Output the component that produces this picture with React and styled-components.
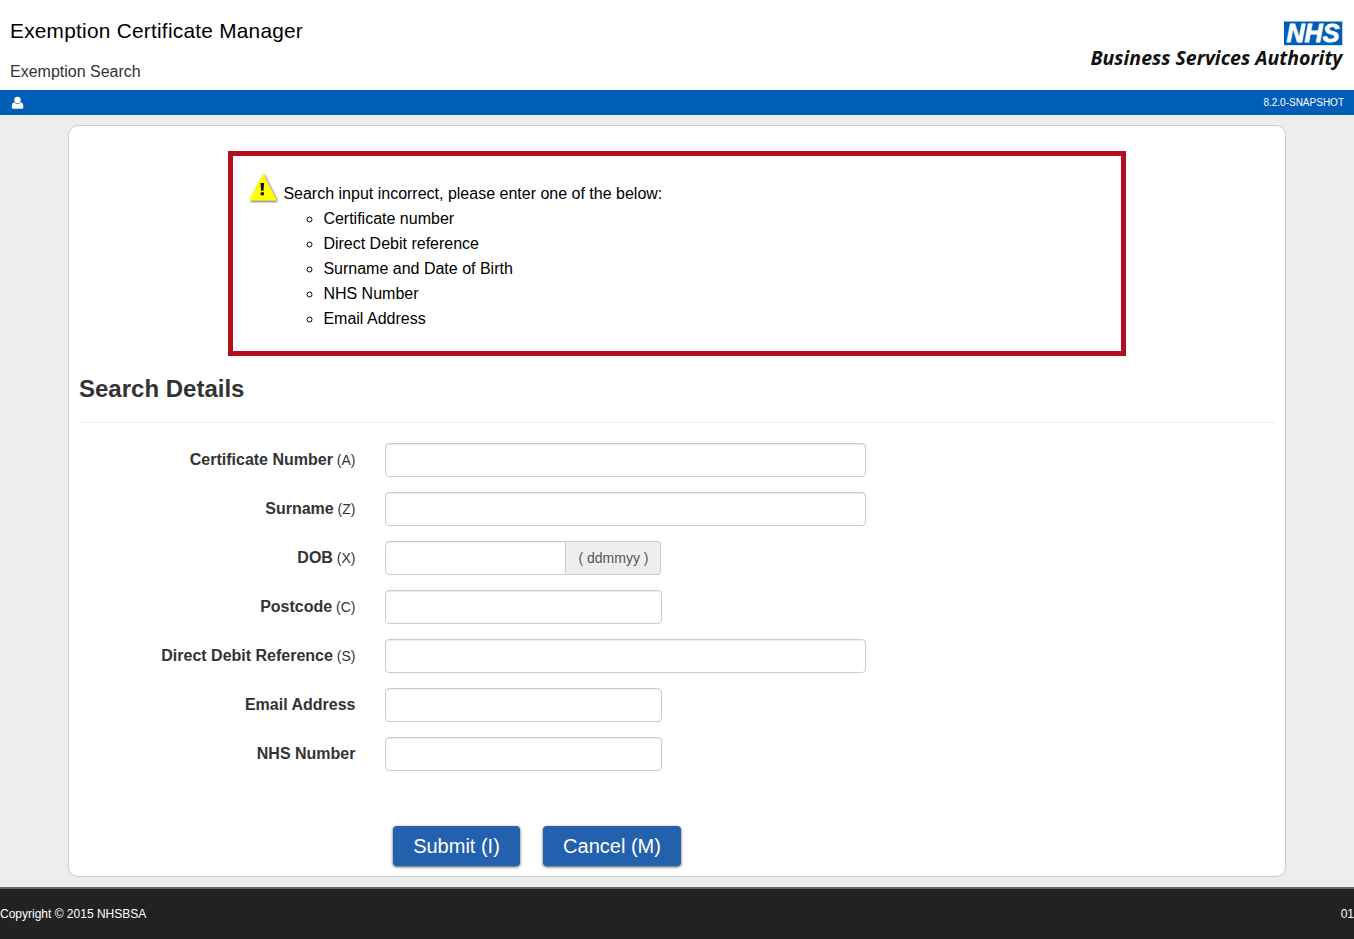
import React from "react";
import styled, { createGlobalStyle } from "styled-components";

const GlobalStyle = createGlobalStyle`
  *, *::before, *::after { box-sizing: border-box; }
  body {
    margin: 0;
    background: #ededed;
    color: #333;
    font: 16px/25px "Liberation Sans", Arial, sans-serif;
    overflow: hidden;
  }
`;

const Page = styled.div`
  display: flex;
  flex-direction: column;
  height: 939px;
`;

const Header = styled.header`
  display: flex;
  justify-content: space-between;
  height: 90px;
  padding: 18px 10px 0;
  background: #fff;
`;

const AppTitle = styled.h1`
  margin: 0;
  color: #000;
  font-size: 20.8px;
  font-weight: 400;
  line-height: 26px;
  letter-spacing: 0.26px;
`;

const PageTitle = styled.p`
  margin: 16px 0 0;
  line-height: 24px;
`;

const Logo = styled.svg`
  width: 256px;
  height: 54px;
`;

const TopBar = styled.div`
  display: flex;
  align-items: center;
  justify-content: space-between;
  height: 25px;
  padding: 0 10px 0 11px;
  background: #005eb8;
  color: #fff;
  font-size: 10px;
`;

const UserIcon = styled.svg`
  width: 13px;
  height: 13px;
  fill: #fff;
`;

const Panel = styled.main`
  width: 1218px;
  height: 752px;
  margin: 10px 0 10px 68px;
  padding: 25px 10px 0;
  border: 1px solid #ccc;
  border-radius: 10px;
  background: #fff;
`;

const Alert = styled.section`
  width: 898px;
  height: 205px;
  margin-left: 149px;
  padding: 16px 15px 0;
  border: 5px solid #b10e1e;
  color: #000;
`;

const AlertLead = styled.div`
  display: flex;
  height: 34px;
`;

const WarningIcon = styled.svg`
  width: 32px;
  height: 34px;
  margin-right: 3.4px;
`;

const AlertText = styled.span`
  padding-top: 9px;
`;

const AlertList = styled.ul`
  margin: 0;
  padding-left: 75.4px;
  list-style: circle;
`;

const SectionTitle = styled.h2`
  height: 67px;
  margin: 0 0 20px;
  padding-top: 20px;
  border-bottom: 1px solid #eee;
  font-size: 24px;
  line-height: 26px;
`;

const Form = styled.div`
  display: flex;
  flex-direction: column;
  gap: 15px;
`;

const Field = styled.div`
  display: flex;
  height: 34px;
`;

const Label = styled.label`
  width: 276.5px;
  margin-right: 29.5px;
  padding-top: 4px;
  font-weight: 700;
  text-align: right;
`;

const AccessKey = styled.span`
  font-size: 14px;
  font-weight: 400;
`;

const Input = styled.input`
  width: ${(p) => p.$width}px;
  height: 34px;
  padding: 6px 12px;
  border: 1px solid #ccc;
  border-radius: ${(p) => (p.$joined ? "4px 0 0 4px" : "4px")};
  background: #fff;
  box-shadow: inset 0 1px 1px rgba(0, 0, 0, 0.075);
  font: inherit;
`;

const Addon = styled.span`
  width: 95px;
  padding-left: 1px;
  border: 1px solid #ccc;
  border-left: 0;
  border-radius: 0 4px 4px 0;
  background: #eee;
  color: #555;
  font-size: 14px;
  line-height: 32px;
  text-align: center;
`;

const Actions = styled.div`
  display: flex;
  gap: 23px;
  margin: 55px 0 0 314px;
`;

const Button = styled.button`
  width: ${(p) => p.$width}px;
  height: 40px;
  padding: 0;
  border: 0;
  border-radius: 4px;
  background: #2360ad;
  box-shadow: 0 1px 3px rgba(0, 0, 0, 0.7);
  color: #fff;
  font: 20px/40px "Liberation Sans", Arial, sans-serif;
`;

const Footer = styled.footer`
  display: flex;
  justify-content: space-between;
  height: 52px;
  padding-top: 13px;
  border-top: 2px solid #666;
  background: #222;
  color: #fff;
  font-size: 12px;
`;

const fields = [
  { label: "Certificate Number", accessKey: "A", width: 481 },
  { label: "Surname", accessKey: "Z", width: 481 },
  { label: "DOB", accessKey: "X", width: 181, hint: "( ddmmyy )" },
  { label: "Postcode", accessKey: "C", width: 277 },
  { label: "Direct Debit Reference", accessKey: "S", width: 481 },
  { label: "Email Address", width: 277 },
  { label: "NHS Number", width: 277 },
];

const criteria = [
  "Certificate number",
  "Direct Debit reference",
  "Surname and Date of Birth",
  "NHS Number",
  "Email Address",
];

export default function App() {
  return (
    <>
      <GlobalStyle />
      <Page>
        <Header>
          <div>
            <AppTitle>Exemption Certificate Manager</AppTitle>
            <PageTitle>Exemption Search</PageTitle>
          </div>
          <Logo viewBox="0 0 256 54" role="img" aria-label="NHS Business Services Authority">
            <rect x="196" y="3.5" width="58.3" height="23.7" fill="#005eb8" />
            <text x="198.5" y="24" textLength="53" lengthAdjust="spacingAndGlyphs" fontFamily="Liberation Sans, sans-serif" fontSize="25" fontWeight="700" fontStyle="italic" fill="#fff" stroke="#fff" strokeWidth="0.8">NHS</text>
            <text x="2.5" y="47" textLength="252" lengthAdjust="spacingAndGlyphs" fontFamily="Open Sans, sans-serif" fontSize="18.7" fontWeight="700" fontStyle="italic" fill="#111">Business Services Authority</text>
          </Logo>
        </Header>
        <TopBar>
          <UserIcon viewBox="0 0 13 13">
            <ellipse cx="6.5" cy="4" rx="3.2" ry="3.3" />
            <path d="M3.4 6.2C1.6 6.4.8 8 .8 10.2v1c0 .9.6 1.5 1.5 1.5h8.500c.9 0 1.500-.6 1.500-1.500v-1c0-2.200-.8-3.800-2.600-4C8.500 8.300 4.600 8.300 3.400 6.200Z" />
          </UserIcon>
          <span>8.2.0-SNAPSHOT</span>
        </TopBar>
        <Panel>
          <Alert>
            <AlertLead>
              <WarningIcon viewBox="0 0 32 34">
                <defs>
                  <filter id="soft" x="-20%" y="-20%" width="150%" height="150%">
                    <feDropShadow dx="1" dy="1" stdDeviation="0.9" floodColor="#000" floodOpacity="0.75" />
                  </filter>
                </defs>
                <path d="M15 1.500L28.700 28.500H1.200Z" fill="#ff0" filter="url(#soft)" />
                <path d="M12.500 11h3.600l-.6 7.800h-2.400ZM12.700 20.300h3.200v3h-3.200Z" fill="#111" />
              </WarningIcon>
              <AlertText>Search input incorrect, please enter one of the below:</AlertText>
            </AlertLead>
            <AlertList>
              {criteria.map((c) => (
                <li key={c}>{c}</li>
              ))}
            </AlertList>
          </Alert>
          <SectionTitle>Search Details</SectionTitle>
          <Form>
            {fields.map((f) => (
              <Field key={f.label}>
                <Label>
                  {f.label}
                  {f.accessKey && <AccessKey> ({f.accessKey})</AccessKey>}
                </Label>
                <Input $width={f.width} $joined={!!f.hint} aria-label={f.label} />
                {f.hint && <Addon>{f.hint}</Addon>}
              </Field>
            ))}
          </Form>
          <Actions>
            <Button $width={127}>Submit (I)</Button>
            <Button $width={138}>Cancel (M)</Button>
          </Actions>
        </Panel>
        <Footer>
          <span>Copyright © 2015 NHSBSA</span>
          <span>01</span>
        </Footer>
      </Page>
    </>
  );
}
